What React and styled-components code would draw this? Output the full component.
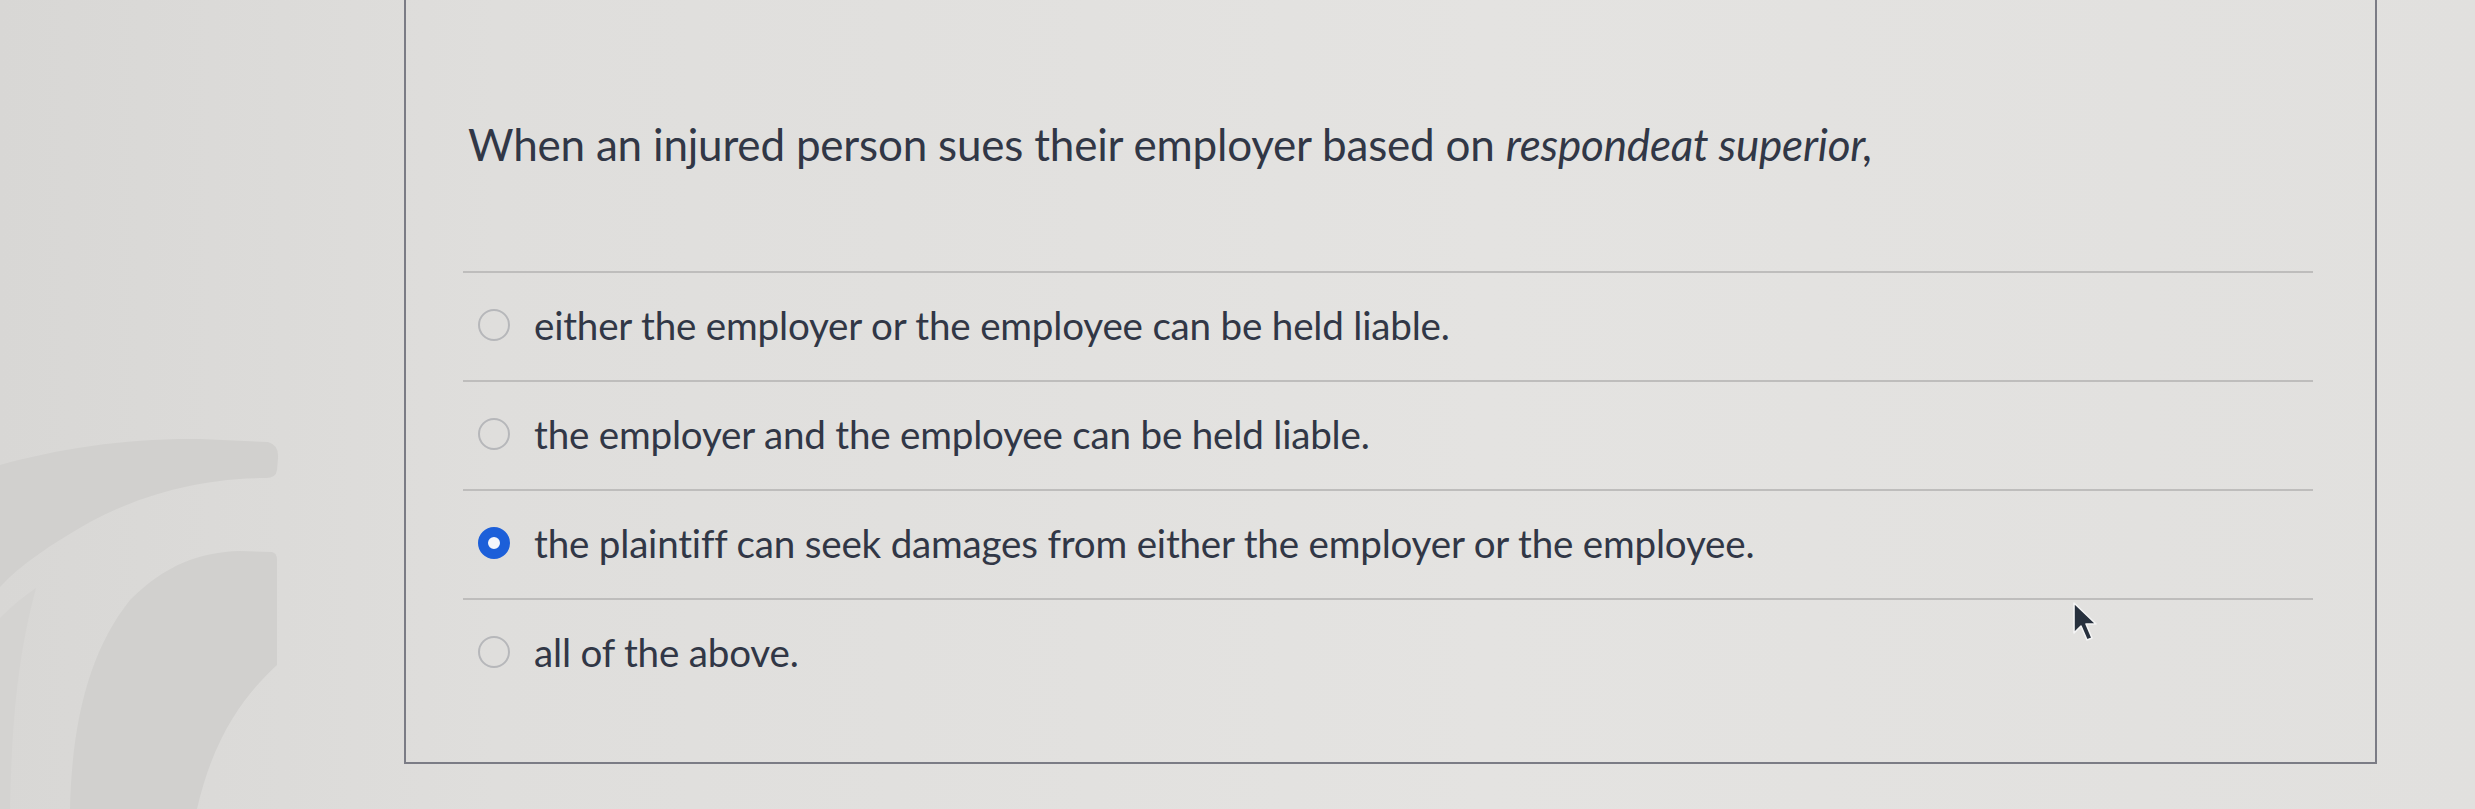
import React from "react";
import styled, { createGlobalStyle } from "styled-components";

const GlobalStyle = createGlobalStyle`
  html, body {
    margin: 0;
    padding: 0;
  }
  body {
    background: linear-gradient(90deg, #d8d7d5 0%, #dfdedc 20%, #e4e3e1 60%, #e1e0de 100%);
    font-family: Lato, "Noto Sans", "Liberation Sans", sans-serif;
    overflow: hidden;
  }
`;

const Page = styled.div`
  display: flex;
  width: 2475px;
  height: 809px;
`;

const Gutter = styled.div`
  flex: 0 0 404px;
  height: 809px;
  display: flex;
`;

const Watermark = styled.svg`
  width: 404px;
  height: 809px;
  display: block;
`;

const Card = styled.section`
  position: relative;
  flex: 0 0 1973px;
  height: 764px;
  box-sizing: border-box;
  border: 2px solid #7b7c85;
  border-top: none;
  padding-top: 119px;
  color: #313746;
`;

const Question = styled.p`
  margin: 0 0 102px 62px;
  font-size: 44px;
  line-height: 50px;
  font-weight: 400;
  letter-spacing: -0.2px;

  em {
    font-style: italic;
  }
`;

const Answers = styled.ul`
  list-style: none;
  margin: 0 62px 0 57px;
  padding: 0;
`;

const Answer = styled.li`
  display: flex;
  align-items: center;
  gap: 24px;
  box-sizing: border-box;
  height: 109px;
  padding: 0 0 4px 15px;
  border-top: 2px solid #bebdbc;
`;

const Radio = styled.span`
  flex: 0 0 auto;
  box-sizing: border-box;
  width: 32px;
  height: 32px;
  border-radius: 50%;
  border: ${(p) => (p.$checked ? "10px solid #1c5fd9" : "2px solid #b6b7ba")};
  background: ${(p) => (p.$checked ? "#f4f6fb" : "transparent")};
`;

const AnswerText = styled.span`
  font-size: 38.6px;
  line-height: 50px;
  letter-spacing: -0.2px;
`;

const Cursor = styled.svg`
  position: absolute;
  left: 1666px;
  top: 601px;
  width: 26px;
  height: 42px;
`;

const answers = [
  { text: "either the employer or the employee can be held liable.", checked: false },
  { text: "the employer and the employee can be held liable.", checked: false },
  { text: "the plaintiff can seek damages from either the employer or the employee.", checked: true },
  { text: "all of the above.", checked: false },
];

export default function App() {
  return (
    <>
      <GlobalStyle />
      <Page>
        <Gutter>
          <Watermark viewBox="0 0 404 809" aria-hidden="true">
            <path
              d="M0,465 C60,448 130,438 200,439 L268,442 Q279,445 278,458 L277,470 Q276,478 266,478 C200,478 140,495 90,522 C50,545 20,565 0,587 Z"
              fill="#d1d0ce"
            />
            <path
              d="M240,551 L272,552 Q277,553 277,560 L277,665 C250,690 215,730 197,809 L70,809 C72,720 90,650 130,600 C165,565 200,552 240,551 Z"
              fill="#d1d0ce"
            />
            <path
              d="M0,618 C12,606 24,596 36,588 C22,640 12,700 10,809 L0,809 Z"
              fill="#d4d3d1"
            />
          </Watermark>
        </Gutter>
        <Card>
          <Question>
            When an injured person sues their employer based on <em>respondeat superior,</em>
          </Question>
          <Answers>
            {answers.map((a) => (
              <Answer key={a.text}>
                <Radio $checked={a.checked} />
                <AnswerText>{a.text}</AnswerText>
              </Answer>
            ))}
          </Answers>
          <Cursor viewBox="0 0 26 42" aria-hidden="true">
            <path
              d="M2,2 L2,32 L9,25 L15,39 L20,37 L14,23 L24,23 Z"
              fill="#27303d"
              stroke="#f4f4f4"
              strokeWidth="1.6"
              strokeLinejoin="round"
            />
          </Cursor>
        </Card>
      </Page>
    </>
  );
}
